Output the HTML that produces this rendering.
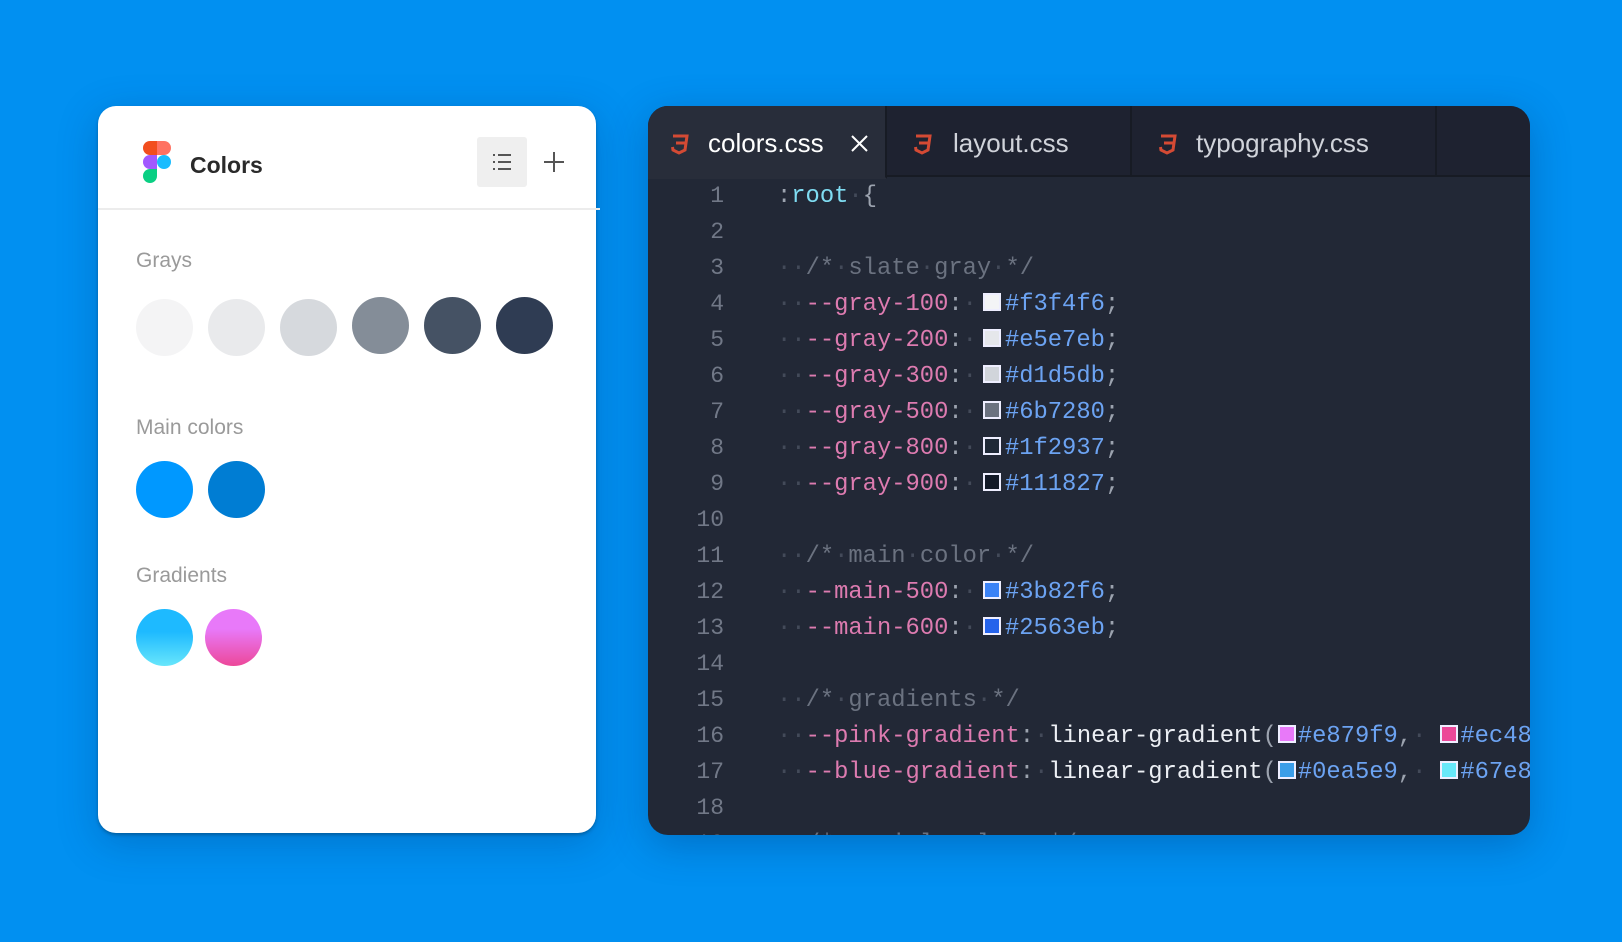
<!DOCTYPE html>
<html><head><meta charset="utf-8"><style>
*{margin:0;padding:0;box-sizing:border-box}
body{width:1622px;height:942px;background:#0190f1;position:relative;overflow:hidden;font-family:"Liberation Sans",sans-serif}
.card{position:absolute;left:98px;top:106px;width:498px;height:727px;background:#fff;border-radius:18px;box-shadow:0 2px 3px rgba(0,0,0,.25),0 10px 40px rgba(0,40,100,.25)}
.hdr{position:absolute;left:0;top:0;width:502px;height:104px;border-bottom:2px solid #ececec}
.title{position:absolute;left:92px;top:46px;font-size:23px;font-weight:bold;color:#2a2a2a}
.lbtn{position:absolute;left:379px;top:31px;width:50px;height:50px;background:#efefef;border-radius:3px}
.lbl{position:absolute;left:38px;font-size:21px;color:#9a9a9a}
.c{position:absolute;width:57px;height:57px;border-radius:50%}
.ed{position:absolute;left:648px;top:106px;width:882px;height:729px;background:#222836;border-radius:20px;overflow:hidden;box-shadow:0 10px 40px rgba(0,40,100,.3)}
.tabs{position:absolute;left:0;top:0;width:100%;height:71px;background:#1e2230;border-bottom:2px solid #171b24}
.tab{position:absolute;top:0;height:71px;border-right:2px solid #171b24;font-size:26px;color:#d0d3da}
.tab span{position:absolute;top:22px}
.tab svg{position:absolute;top:27px}
.code{position:absolute;left:0;top:75px;width:100%;font-family:"Liberation Mono",monospace;font-size:23.8px}
.ln{position:absolute;left:0;width:76px;text-align:right;color:#717887;font-size:23px}
.tx{position:absolute;left:129px;white-space:pre;color:#9ca3af}
.d{color:#434a59}.cm{color:#6b7280}.p{color:#dd7bb0}.h{color:#6ca3f2}.r{color:#7fdcf2}.w{color:#eceff4}
.sw{display:inline-block;width:18px;height:18px;border:2px solid #eef;margin:0 4px 0 6px;vertical-align:-1px}
</style></head><body>
<div class="card">
 <div class="hdr">
  <svg style="position:absolute;left:45px;top:35px" width="28" height="42" viewBox="0 0 28 42">
   <path d="M7 0h7v14H7a7 7 0 0 1 0-14z" fill="#f24e1e"/>
   <path d="M14 0h7a7 7 0 0 1 0 14h-7z" fill="#ff7262"/>
   <path d="M7 14h7v14H7a7 7 0 0 1 0-14z" fill="#a259ff"/>
   <circle cx="21" cy="21" r="7" fill="#1abcfe"/>
   <path d="M7 28h7v7a7 7 0 1 1-7-7z" fill="#0acf83"/>
  </svg>
  <div class="title">Colors</div>
  <div class="lbtn"><svg width="50" height="50" viewBox="0 0 50 50" stroke="#555" stroke-width="2"><path d="M16 18h2M16 25h2M16 32h2M21 18h13M21 25h13M21 32h13"/></svg></div>
  <svg style="position:absolute;left:445px;top:45px" width="22" height="22" viewBox="0 0 22 22" stroke="#555" stroke-width="2"><path d="M11 1v20M1 11h20"/></svg>
 </div>
 <div class="lbl" style="top:143px">Grays</div>
 <div class="c" style="left:38px;top:193px;background:#f4f4f5"></div>
 <div class="c" style="left:110px;top:193px;background:#e9eaec"></div>
 <div class="c" style="left:182px;top:193px;background:#d6d9dd"></div>
 <div class="c" style="left:254px;top:191px;background:#848d98"></div>
 <div class="c" style="left:326px;top:191px;background:#455264"></div>
 <div class="c" style="left:398px;top:191px;background:#2f3c53"></div>
 <div class="lbl" style="top:310px">Main colors</div>
 <div class="c" style="left:38px;top:355px;background:#0098ff"></div>
 <div class="c" style="left:110px;top:355px;background:#007dd3"></div>
 <div class="lbl" style="top:458px">Gradients</div>
 <div class="c" style="left:38px;top:503px;background:linear-gradient(#1ebaff 40%,#68e6fb)"></div>
 <div class="c" style="left:107px;top:503px;background:linear-gradient(#e879f9 35%,#ec4899)"></div>
</div>

<div class="ed">
 <div class="tabs">
  <div class="tab" style="left:0;width:239px;background:#282d3a;border-bottom:2px solid #282d3a;height:73px">
   <svg style="left:22px" width="20" height="22" viewBox="0 0 20 22" fill="none" stroke="#d44a34" stroke-width="3"><path d="M3 3h14l-2 14-6 3-6-3-.5-3M6 10h9"/></svg>
   <span style="left:60px;color:#fff">colors.css</span>
   <svg style="left:202px;top:28px" width="19" height="19" viewBox="0 0 19 19" stroke="#fff" stroke-width="2"><path d="M2 2l15 15M17 2L2 17"/></svg>
  </div>
  <div class="tab" style="left:239px;width:245px">
   <svg style="left:26px" width="20" height="22" viewBox="0 0 20 22" fill="none" stroke="#d44a34" stroke-width="3"><path d="M3 3h14l-2 14-6 3-6-3-.5-3M6 10h9"/></svg>
   <span style="left:66px">layout.css</span>
  </div>
  <div class="tab" style="left:484px;width:305px">
   <svg style="left:26px" width="20" height="22" viewBox="0 0 20 22" fill="none" stroke="#d44a34" stroke-width="3"><path d="M3 3h14l-2 14-6 3-6-3-.5-3M6 10h9"/></svg>
   <span style="left:64px">typography.css</span>
  </div>
 </div>
 <div class="code">
  <div class="ln" style="top:2px">1</div><div class="tx" style="top:2px">:<span class="r">root</span><span class="d">·</span>{</div>
  <div class="ln" style="top:38px">2</div>
  <div class="ln" style="top:74px">3</div><div class="tx cm" style="top:74px"><span class="d">··</span>/*<span class="d">·</span>slate<span class="d">·</span>gray<span class="d">·</span>*/</div>
  <div class="ln" style="top:110px">4</div><div class="tx" style="top:110px"><span class="d">··</span><span class="p">--gray-100</span>:<span class="d">·</span><span class="sw" style="background:#f3f4f6"></span><span class="h">#f3f4f6</span>;</div>
  <div class="ln" style="top:146px">5</div><div class="tx" style="top:146px"><span class="d">··</span><span class="p">--gray-200</span>:<span class="d">·</span><span class="sw" style="background:#e5e7eb"></span><span class="h">#e5e7eb</span>;</div>
  <div class="ln" style="top:182px">6</div><div class="tx" style="top:182px"><span class="d">··</span><span class="p">--gray-300</span>:<span class="d">·</span><span class="sw" style="background:#d1d5db"></span><span class="h">#d1d5db</span>;</div>
  <div class="ln" style="top:218px">7</div><div class="tx" style="top:218px"><span class="d">··</span><span class="p">--gray-500</span>:<span class="d">·</span><span class="sw" style="background:#6b7280"></span><span class="h">#6b7280</span>;</div>
  <div class="ln" style="top:254px">8</div><div class="tx" style="top:254px"><span class="d">··</span><span class="p">--gray-800</span>:<span class="d">·</span><span class="sw" style="background:#1f2937"></span><span class="h">#1f2937</span>;</div>
  <div class="ln" style="top:290px">9</div><div class="tx" style="top:290px"><span class="d">··</span><span class="p">--gray-900</span>:<span class="d">·</span><span class="sw" style="background:#111827"></span><span class="h">#111827</span>;</div>
  <div class="ln" style="top:326px">10</div>
  <div class="ln" style="top:362px">11</div><div class="tx cm" style="top:362px"><span class="d">··</span>/*<span class="d">·</span>main<span class="d">·</span>color<span class="d">·</span>*/</div>
  <div class="ln" style="top:398px">12</div><div class="tx" style="top:398px"><span class="d">··</span><span class="p">--main-500</span>:<span class="d">·</span><span class="sw" style="background:#3b82f6"></span><span class="h">#3b82f6</span>;</div>
  <div class="ln" style="top:434px">13</div><div class="tx" style="top:434px"><span class="d">··</span><span class="p">--main-600</span>:<span class="d">·</span><span class="sw" style="background:#2563eb"></span><span class="h">#2563eb</span>;</div>
  <div class="ln" style="top:470px">14</div>
  <div class="ln" style="top:506px">15</div><div class="tx cm" style="top:506px"><span class="d">··</span>/*<span class="d">·</span>gradients<span class="d">·</span>*/</div>
  <div class="ln" style="top:542px">16</div><div class="tx" style="top:542px"><span class="d">··</span><span class="p">--pink-gradient</span>:<span class="d">·</span><span class="w">linear-gradient</span>(<span class="sw" style="background:#e879f9;margin-left:1px;margin-right:2px"></span><span class="h">#e879f9</span>,<span class="d">·</span><span class="sw" style="background:#ec4899;margin-left:14px;margin-right:2px"></span><span class="h">#ec4899</span>);</div>
  <div class="ln" style="top:578px">17</div><div class="tx" style="top:578px"><span class="d">··</span><span class="p">--blue-gradient</span>:<span class="d">·</span><span class="w">linear-gradient</span>(<span class="sw" style="background:#3b9ee9;margin-left:1px;margin-right:2px"></span><span class="h">#0ea5e9</span>,<span class="d">·</span><span class="sw" style="background:#67e8f9;margin-left:14px;margin-right:2px"></span><span class="h">#67e8f9</span>);</div>
  <div class="ln" style="top:614px">18</div>
  <div class="ln" style="top:650px">19</div><div class="tx cm" style="top:650px"><span class="d">··</span>/*<span class="d">·</span>social<span class="d">·</span>colors<span class="d">·</span>*/</div>
 </div>
</div>
</body></html>
